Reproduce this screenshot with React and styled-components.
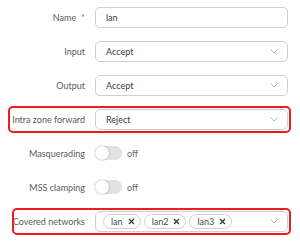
import React from "react";
import styled, { createGlobalStyle } from "styled-components";

const GlobalStyle = createGlobalStyle`
  body {
    margin: 0;
    background: #fff;
    font-family: Lato, "Open Sans", "Liberation Sans", sans-serif;
  }
`

const Form = styled.div`
  width: 300px;
  height: 248px;
  overflow: hidden;
`

const Row = styled.div`
  position: relative;
  display: grid;
  grid-template-columns: 85px 1fr;
  column-gap: 10px;
  align-items: center;
  height: 34px;
  padding-right: 12px;

  &::before {
    content: "";
    display: ${(p) => (p.$highlight ? "block" : "none")};
    position: absolute;
    left: ${(p) => p.$boxLeft || 8}px;
    right: 9px;
    top: 3.5px;
    height: 27px;
    box-sizing: border-box;
    border: 2px solid #ec1c24;
    border-radius: 5px;
    pointer-events: none;
  }
`

const Label = styled.label`
  text-align: right;
  font-size: 9px;
  color: #5a5a5a;
  white-space: nowrap;
`

const Required = styled.span`
  color: #e53935;
  margin-left: 5px;
`

const Field = styled.div`
  position: relative;
  display: flex;
  align-items: center;
  height: 21px;
  box-sizing: border-box;
  border: 1px solid #cfcfcf;
  border-radius: 5px;
  padding: 0 10px;
  font-size: 9px;
  color: #3a3a3a;
  background: #fff;
`

const Chevron = styled.svg`
  position: absolute;
  right: 9px;
  top: 50%;
  margin-top: -2px;
`

const ToggleWrap = styled.div`
  display: flex;
  align-items: center;
  gap: 5px;
`

const Track = styled.div`
  width: 27px;
  height: 14px;
  border-radius: 7px;
  background: #e2e2e2;
  display: flex;
  align-items: center;
`

const Knob = styled.div`
  width: 14px;
  height: 14px;
  border-radius: 50%;
  background: #fff;
  box-shadow: 0 0 2px rgba(0, 0, 0, 0.35);
`

const StateText = styled.span`
  font-size: 9px;
  color: #666;
`

const Tags = styled.div`
  display: flex;
  gap: 3px;
  margin-left: -3px;
`

const Tag = styled.span`
  display: inline-flex;
  align-items: center;
  gap: 5px;
  height: 15px;
  box-sizing: border-box;
  padding: 0 5px 0 7px;
  border: 1px solid #d0d0d0;
  border-radius: 8px;
  font-size: 9px;
  color: #4a4a4a;
`

const ChevronIcon = () => (
  <Chevron width="8" height="5" viewBox="0 0 8 5">
    <path d="M0.5 0.5 L4 4 L7.5 0.5" fill="none" stroke="#b5b5b5" strokeWidth="1" />
  </Chevron>
)

const CloseIcon = () => (
  <svg width="7" height="7" viewBox="0 0 7 7">
    <path d="M1 1 L6 6 M6 1 L1 6" stroke="#333" strokeWidth="1.2" />
  </svg>
)

const Toggle = () => (
  <ToggleWrap>
    <Track>
      <Knob />
    </Track>
    <StateText>off</StateText>
  </ToggleWrap>
)

export default function App() {
  return (
    <Form>
      <GlobalStyle />
      <Row>
        <Label>Name<Required>*</Required></Label>
        <Field>lan</Field>
      </Row>
      <Row>
        <Label>Input</Label>
        <Field>Accept<ChevronIcon /></Field>
      </Row>
      <Row>
        <Label>Output</Label>
        <Field>Accept<ChevronIcon /></Field>
      </Row>
      <Row $highlight $boxLeft={8}>
        <Label>Intra zone forward</Label>
        <Field>Reject<ChevronIcon /></Field>
      </Row>
      <Row>
        <Label>Masquerading</Label>
        <Toggle />
      </Row>
      <Row>
        <Label>MSS clamping</Label>
        <Toggle />
      </Row>
      <Row $highlight $boxLeft={12}>
        <Label>Covered networks</Label>
        <Field>
          <Tags>
            {["lan", "lan2", "lan3"].map((n) => (
              <Tag key={n}>{n}<CloseIcon /></Tag>
            ))}
          </Tags>
          <ChevronIcon />
        </Field>
      </Row>
    </Form>
  )
}
